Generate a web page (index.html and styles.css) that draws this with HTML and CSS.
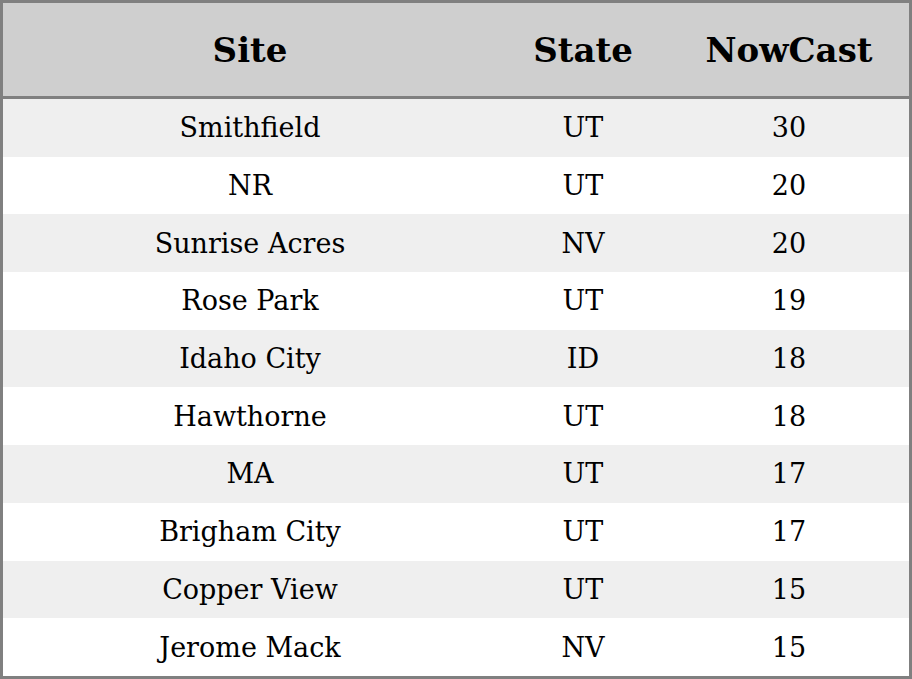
FILE: index.html
```html
<!DOCTYPE html>
<html>
<head>
<meta charset="utf-8">
<link rel="stylesheet" href="styles.css">
</head>
<body>
<table class="aq">
  <colgroup>
    <col class="c-site">
    <col class="c-state">
    <col class="c-now">
  </colgroup>
  <thead>
    <tr><th>Site</th><th>State</th><th>NowCast</th></tr>
  </thead>
  <tbody>
    <tr><td>Smithfield</td><td>UT</td><td>30</td></tr>
    <tr><td>NR</td><td>UT</td><td>20</td></tr>
    <tr><td>Sunrise Acres</td><td>NV</td><td>20</td></tr>
    <tr><td>Rose Park</td><td>UT</td><td>19</td></tr>
    <tr><td>Idaho City</td><td>ID</td><td>18</td></tr>
    <tr><td>Hawthorne</td><td>UT</td><td>18</td></tr>
    <tr><td>MA</td><td>UT</td><td>17</td></tr>
    <tr><td>Brigham City</td><td>UT</td><td>17</td></tr>
    <tr><td>Copper View</td><td>UT</td><td>15</td></tr>
    <tr><td>Jerome Mack</td><td>NV</td><td>15</td></tr>
  </tbody>
</table>
</body>
</html>
```

FILE: styles.css
```css
html, body {
  margin: 0;
  padding: 0;
  background: #ffffff;
}
.aq {
  width: 912px;
  height: 679px;
  border: 3px solid #808080;
  border-collapse: separate;
  border-spacing: 0;
  font-family: "DejaVu Serif", serif;
  color: #000;
  table-layout: fixed;
  box-sizing: border-box;
}
.c-site { width: 494px; }
.c-state { width: 172px; }
.c-now { width: 240px; }
.aq th {
  background: #cfcfcf;
  font-weight: bold;
  font-size: 34px;
  height: 93px;
  padding: 0;
  border-bottom: 3px solid #808080;
  text-align: center;
  vertical-align: middle;
}
.aq td {
  font-size: 27px;
  height: 57.7px;
  padding: 0;
  text-align: center;
  vertical-align: middle;
}
.aq tbody tr:nth-child(odd) td {
  background: #efefef;
}
```
